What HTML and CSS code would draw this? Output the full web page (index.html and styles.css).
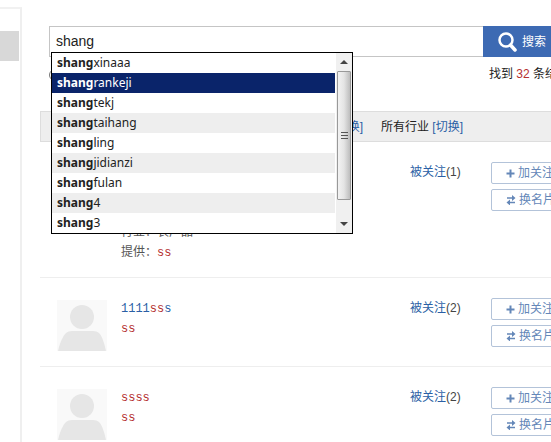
FILE: index.html
```html
<!DOCTYPE html>
<html lang="zh-CN">
  <head>
    <meta charset="UTF-8" />
    <meta name="viewport" content="width=device-width, initial-scale=1.0" />
    <title>搜索</title>
    <link rel="stylesheet" href="styles.css">
  </head>
  <body>
    <svg class="symbols" aria-hidden="true">
      <symbol id="avatar" viewBox="0 0 50 51">
        <rect width="50" height="51" fill="#f9f9f9" />
        <circle cx="25" cy="17" r="12" fill="#e6e6e6" />
        <path d="M1 51C3 42 6 36 9 33Q11 31 15 31H36Q40 31 42 33C45 36 47 42 49 51Z" fill="#e6e6e6" />
      </symbol>
      <symbol id="plus" viewBox="0 0 9 9">
        <path d="M4.5 0.5V8.5M0.5 4.5H8.5" stroke="#6487b8" stroke-width="2" />
      </symbol>
      <symbol id="swap" viewBox="0 0 10 10">
        <path d="M1 3H7M3 7.500H9" stroke="#6487b8" stroke-width="1.600" />
        <path d="M6 0L9.500 3L6 6ZM4 4.500L0.500 7.500L4 10.500Z" fill="#6487b8" />
      </symbol>
    </svg>
    <aside class="sidebar">
      <div class="sidebar-current"></div>
    </aside>
    <main class="content">
      <form class="search">
        <div class="search-row">
          <input class="search-input" type="text" value="shang" aria-label="搜索" autocomplete="off" />
          <button class="search-button" type="button">
            <svg width="19" height="20" viewBox="0 0 19 20" aria-hidden="true">
              <circle cx="8" cy="8" r="6.500" fill="none" stroke="#fff" stroke-width="2.500" />
              <path d="M12.500 13L17 18" stroke="#fff" stroke-width="3.500" stroke-linecap="round" />
            </svg>
            搜索
          </button>
        </div>
        <div class="suggest">
          <ul class="suggest-list">
            <li><b>shang</b>xinaaa</li>
            <li class="selected"><b>shang</b>rankeji</li>
            <li><b>shang</b>tekj</li>
            <li><b>shang</b>taihang</li>
            <li><b>shang</b>ling</li>
            <li><b>shang</b>jidianzi</li>
            <li><b>shang</b>fulan</li>
            <li><b>shang</b>4</li>
            <li><b>shang</b>3</li>
          </ul>
          <div class="scrollbar">
            <span class="arrow arrow-up"></span>
            <div class="thumb"><span class="grip"></span></div>
            <span class="arrow arrow-down"></span>
          </div>
        </div>
        <div class="search-meta">
          <input class="scope" type="radio" aria-label="全部" />
          <p class="count">找到 <em>32</em> 条结果</p>
        </div>
      </form>
      <div class="filters">
        <span>所有地区 <a href="#">[切换]</a></span>
        <span>所有行业 <a href="#">[切换]</a></span>
      </div>
      <div class="results">
        <article class="result">
          <svg class="avatar" aria-hidden="true"><use href="#avatar" /></svg>
          <div class="info info-full">
            <p>行业：农产品</p>
            <p>提供：<em class="hit">ss</em></p>
          </div>
          <p class="followers"><a href="#">被关注</a>(1)</p>
          <div class="actions">
            <button type="button"><svg width="9" height="9" aria-hidden="true"><use href="#plus" /></svg>加关注</button>
            <button type="button"><svg width="10" height="10" aria-hidden="true"><use href="#swap" /></svg>换名片</button>
          </div>
        </article>
        <article class="result">
          <svg class="avatar" aria-hidden="true"><use href="#avatar" /></svg>
          <div class="info">
            <p><a class="name" href="#">1111<em>ss</em>s</a></p>
            <p><em class="hit">ss</em></p>
          </div>
          <p class="followers"><a href="#">被关注</a>(2)</p>
          <div class="actions">
            <button type="button"><svg width="9" height="9" aria-hidden="true"><use href="#plus" /></svg>加关注</button>
            <button type="button"><svg width="10" height="10" aria-hidden="true"><use href="#swap" /></svg>换名片</button>
          </div>
        </article>
        <article class="result">
          <svg class="avatar" aria-hidden="true"><use href="#avatar" /></svg>
          <div class="info">
            <p><a class="name" href="#"><em>ssss</em></a></p>
            <p><em class="hit">ss</em></p>
          </div>
          <p class="followers"><a href="#">被关注</a>(2)</p>
          <div class="actions">
            <button type="button"><svg width="9" height="9" aria-hidden="true"><use href="#plus" /></svg>加关注</button>
            <button type="button"><svg width="10" height="10" aria-hidden="true"><use href="#swap" /></svg>换名片</button>
          </div>
        </article>
      </div>
    </main>
  </body>
</html>
```

FILE: styles.css
```css
* {
  margin: 0;
  padding: 0;
  box-sizing: border-box;
}
body {
  display: flex;
  min-height: 100vh;
  overflow: hidden;
  font: 12px/20px "Liberation Sans", "Noto Sans CJK SC", sans-serif;
  color: #444;
  background: #fff;
}
a {
  color: #2a5fa5;
  text-decoration: none;
}
em {
  font-style: normal;
  color: #b5302f;
}
.symbols {
  position: absolute;
  width: 0;
  height: 0;
}
.sidebar {
  flex: none;
  width: 22px;
  margin-top: 7px;
  padding-top: 22px;
  border-top: 2px solid #f1f1f1;
  border-right: 2px solid #efefef;
}
.sidebar-current {
  width: 19px;
  height: 30px;
  background: #d8d8d8;
}
.content {
  flex: 1;
  min-width: 0;
  padding: 26px 0 0 18px;
}
.search {
  position: relative;
  height: 85px;
  padding-left: 9px;
}
.search-row {
  display: flex;
  height: 31px;
}
.search-input {
  flex: 1;
  min-width: 0;
  padding: 0 6px 2px;
  border: 1px solid #c5c5c5;
  border-right: 0;
  font: 14px "Liberation Sans", sans-serif;
  color: #222;
  outline: none;
}
.search-button {
  display: flex;
  align-items: center;
  gap: 5px;
  width: 68px;
  padding-left: 15px;
  border: 0;
  font: inherit;
  white-space: nowrap;
  color: #fff;
  background: #3d6ab3;
}
.search-meta {
  display: flex;
  justify-content: space-between;
  padding-top: 7px;
}
.scope {
  width: 12px;
  height: 12px;
  margin-top: 5px;
}
.count {
  width: 62px;
  white-space: nowrap;
  color: #222;
}
.suggest {
  position: absolute;
  top: 26px;
  left: 11px;
  z-index: 1;
  display: flex;
  width: 302px;
  border: 1px solid #000;
  background: #fff;
}
.suggest-list {
  flex: 1;
  list-style: none;
  font-family: "Noto Sans", sans-serif;
  color: #222;
}
.suggest-list li {
  height: 20px;
  padding-left: 5px;
}
.suggest-list li:nth-child(even) {
  background: #eee;
}
.suggest-list li.selected {
  color: #fff;
  background: #0a246a;
}
.scrollbar {
  display: flex;
  flex-direction: column;
  align-items: center;
  width: 16px;
  margin-left: 1px;
  background: #f0f0f0;
}
.arrow {
  width: 0;
  height: 0;
  border: 4px solid transparent;
}
.arrow-up {
  margin: 3px 0 7px;
  border-bottom-color: #444;
}
.arrow-down {
  margin-top: 22px;
  border-top-color: #444;
}
.thumb {
  display: flex;
  align-items: center;
  justify-content: center;
  width: 14px;
  height: 129px;
  border: 1px solid #999;
  border-radius: 1px;
  background: linear-gradient(to right, #f3f3f3, #e4e4e4 50%, #bdbdbd);
}
.grip {
  width: 7px;
  height: 8px;
  background: repeating-linear-gradient(#555 0 1px, transparent 1px 3px);
}
.filters {
  display: flex;
  justify-content: flex-end;
  gap: 18px;
  padding: 5px 88px 4px 0;
  border: 1px solid #ddd;
  border-width: 1px 0 1px 1px;
  color: #222;
  background: #eee;
  white-space: nowrap;
}
.result {
  display: flex;
  padding: 20px 0 15px 17px;
  border-bottom: 1px solid #eee;
}
.avatar {
  flex: none;
  width: 50px;
  height: 51px;
  margin: 2px 14px 0 0;
}
.info {
  flex: 1;
  min-width: 0;
  color: #555;
}
.info-full {
  padding-top: 60px;
}
.name,
.hit {
  font-family: "Liberation Mono", monospace;
  line-height: 1;
}
.followers {
  width: 81px;
}
.actions {
  display: flex;
  flex-direction: column;
  gap: 5px;
  width: 60px;
}
.actions button {
  display: flex;
  align-items: center;
  gap: 3px;
  width: 80px;
  height: 22px;
  padding-left: 14px;
  border: 1px solid #b3c3d9;
  border-radius: 2px;
  font: inherit;
  white-space: nowrap;
  color: #6487b8;
  background: #fff;
}
```
